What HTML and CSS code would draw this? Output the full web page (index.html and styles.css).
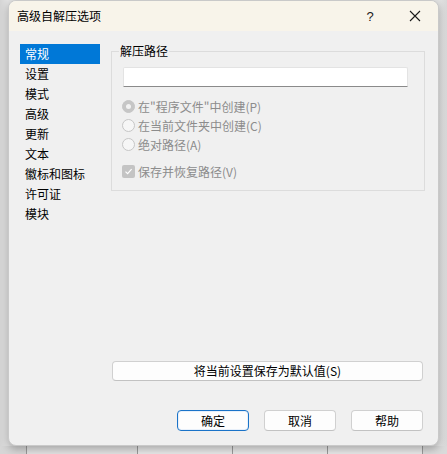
FILE: index.html
```html
<!DOCTYPE html>
<html lang="zh-CN">
<head>
<meta charset="utf-8">
<title>高级自解压选项</title>
<link rel="stylesheet" href="styles.css">
</head>
<body>
<div class="dialog">
  <div class="titlebar">
    <span class="title">高级自解压选项</span>
    <span class="tb-btn help">?</span>
    <span class="tb-btn close">
      <svg width="12" height="12" viewBox="0 0 12 12"><path d="M1 1L11 11M11 1L1 11" stroke="#1a1a1a" stroke-width="1.1" fill="none"/></svg>
    </span>
  </div>
  <div class="content">
    <ul class="sidebar">
      <li class="item active">常规</li>
      <li class="item">设置</li>
      <li class="item">模式</li>
      <li class="item">高级</li>
      <li class="item">更新</li>
      <li class="item">文本</li>
      <li class="item">徽标和图标</li>
      <li class="item">许可证</li>
      <li class="item">模块</li>
    </ul>
    <div class="main">
      <fieldset class="group">
        <legend class="legend">解压路径</legend>
        <div class="textbox"></div>
        <div class="option first"><span class="radio checked"></span><span class="label">在"程序文件"中创建(P)</span></div>
        <div class="option"><span class="radio"></span><span class="label">在当前文件夹中创建(C)</span></div>
        <div class="option"><span class="radio"></span><span class="label">绝对路径(A)</span></div>
        <div class="option check-row"><span class="checkbox"><svg width="9" height="9" viewBox="0 0 9 9"><path d="M1.5 4.6L3.6 6.6L7.6 2.2" stroke="#fff" stroke-width="1.2" fill="none"/></svg></span><span class="label">保存并恢复路径(V)</span></div>
      </fieldset>
      <button class="btn save">将当前设置保存为默认值(S)</button>
      <div class="actions">
        <button class="btn default">确定</button>
        <button class="btn">取消</button>
        <button class="btn">帮助</button>
      </div>
    </div>
  </div>
</div>
<div class="behind">
  <span class="seg s1"></span>
  <span class="seg s2"></span>
  <span class="seg s3"></span>
  <span class="seg s4"></span>
  <span class="seg s5"></span>
</div>
</body>
</html>
```
FILE: styles.css
```css
* { box-sizing: border-box; }
html, body { margin: 0; padding: 0; }
body {
  width: 447px;
  height: 454px;
  overflow: hidden;
  background: linear-gradient(to right, #d4d4d4 0, #e4e4e4 8px, #e4e4e4 439px, #d8d8d8 447px);
  font-family: "Noto Sans CJK SC", "Noto Sans", sans-serif;
  font-size: 12px;
  color: #000;
}
.dialog {
  margin-left: 8px;
  width: 431px;
  height: 446px;
  background: #f0f0f0;
  border-radius: 8px;
  border: 1px solid #c9c9c9;
  box-shadow: 0 3px 9px rgba(0, 0, 0, 0.28);
  overflow: hidden;
  position: relative;
  z-index: 1;
  display: flex;
  flex-direction: column;
}
.titlebar {
  height: 30px;
  flex: none;
  background: #f8f4ea;
  display: flex;
  align-items: center;
  padding-left: 8px;
}
.title { flex: 1; line-height: 16px; }
.tb-btn {
  width: 46px;
  height: 30px;
  display: flex;
  align-items: center;
  justify-content: center;
}
.help { font-family: "Liberation Sans", sans-serif; font-size: 13px; color: #1a1a1a; padding-left: 2px; }
.content {
  flex: 1;
  display: flex;
  padding: 13px 0 0 11px;
}
.sidebar {
  list-style: none;
  margin: 0;
  padding: 0;
  width: 80px;
  flex: none;
}
.item {
  height: 20px;
  line-height: 20px;
  padding-left: 5px;
}
.item.active { background: #0078d7; color: #fff; }
.main {
  margin-left: 11px;
  width: 314px;
  display: flex;
  flex-direction: column;
}
.group {
  margin: 0;
  padding: 0 16px 9px 11px;
  border: 1px solid #dcdcdc;
  min-width: 0;
}
.legend {
  padding: 0 1px;
  margin-left: -4px;
  line-height: 14px;
  height: 14px;
}
.textbox {
  margin-top: 9px;
  height: 20px;
  background: #fff;
  border: 1px solid #e3e3e3;
  border-bottom: 1px solid #8a8a8a;
  border-radius: 2px 2px 0 0;
}
.option {
  height: 19px;
  display: flex;
  align-items: center;
  margin-left: -1px;
  color: #8c8c8c;
}
.option.first { margin-top: 10px; }
.option.check-row { margin-top: 8px; }
.radio {
  width: 13px;
  height: 13px;
  border-radius: 50%;
  border: 1px solid #c6c6c6;
  background: #f6f6f6;
  margin-right: 3px;
  flex: none;
  display: flex;
  align-items: center;
  justify-content: center;
}
.radio.checked { background: #c6c6c6; border-color: #c6c6c6; }
.radio.checked::after {
  content: "";
  width: 5px;
  height: 5px;
  border-radius: 50%;
  background: #f2f2f2;
}
.checkbox {
  width: 13px;
  height: 13px;
  border-radius: 2px;
  background: #c4c4c4;
  margin-right: 3px;
  flex: none;
  display: flex;
  align-items: center;
  justify-content: center;
}
.label { line-height: 19px; }
.btn {
  font-family: "Noto Sans CJK SC", "Noto Sans", sans-serif;
  font-size: 12px;
  color: #000;
  background: #fdfdfd;
  border: 1px solid #d0d0d0;
  border-bottom-color: #c2c2c2;
  border-radius: 4px;
  padding: 0;
  line-height: 18px;
}
.save {
  margin-top: 170px;
  margin-left: 1px;
  width: 311px;
  height: 20px;
}
.actions {
  margin-top: 29px;
  display: flex;
  justify-content: flex-end;
  gap: 15px;
  padding-right: 2px;
}
.actions .btn { width: 72px; height: 21px; }
.btn.default { border: 1px solid #1a73c8; box-shadow: inset 0 0 0 1px #e8f0fa; }
.behind {
  height: 8px;
  display: flex;
  background: #dadada;
}
.seg { height: 8px; border-right: 1px solid #9a9a9a; }
.s1 { width: 27px; background: #d6d6d6; }
.s2 { width: 111px; background: #e2e2e2; }
.s3 { width: 95px; background: #e8e8e8; }
.s4 { width: 95px; background: #e8e8e8; }
.s5 { width: 95px; background: #e8e8e8; }
```
